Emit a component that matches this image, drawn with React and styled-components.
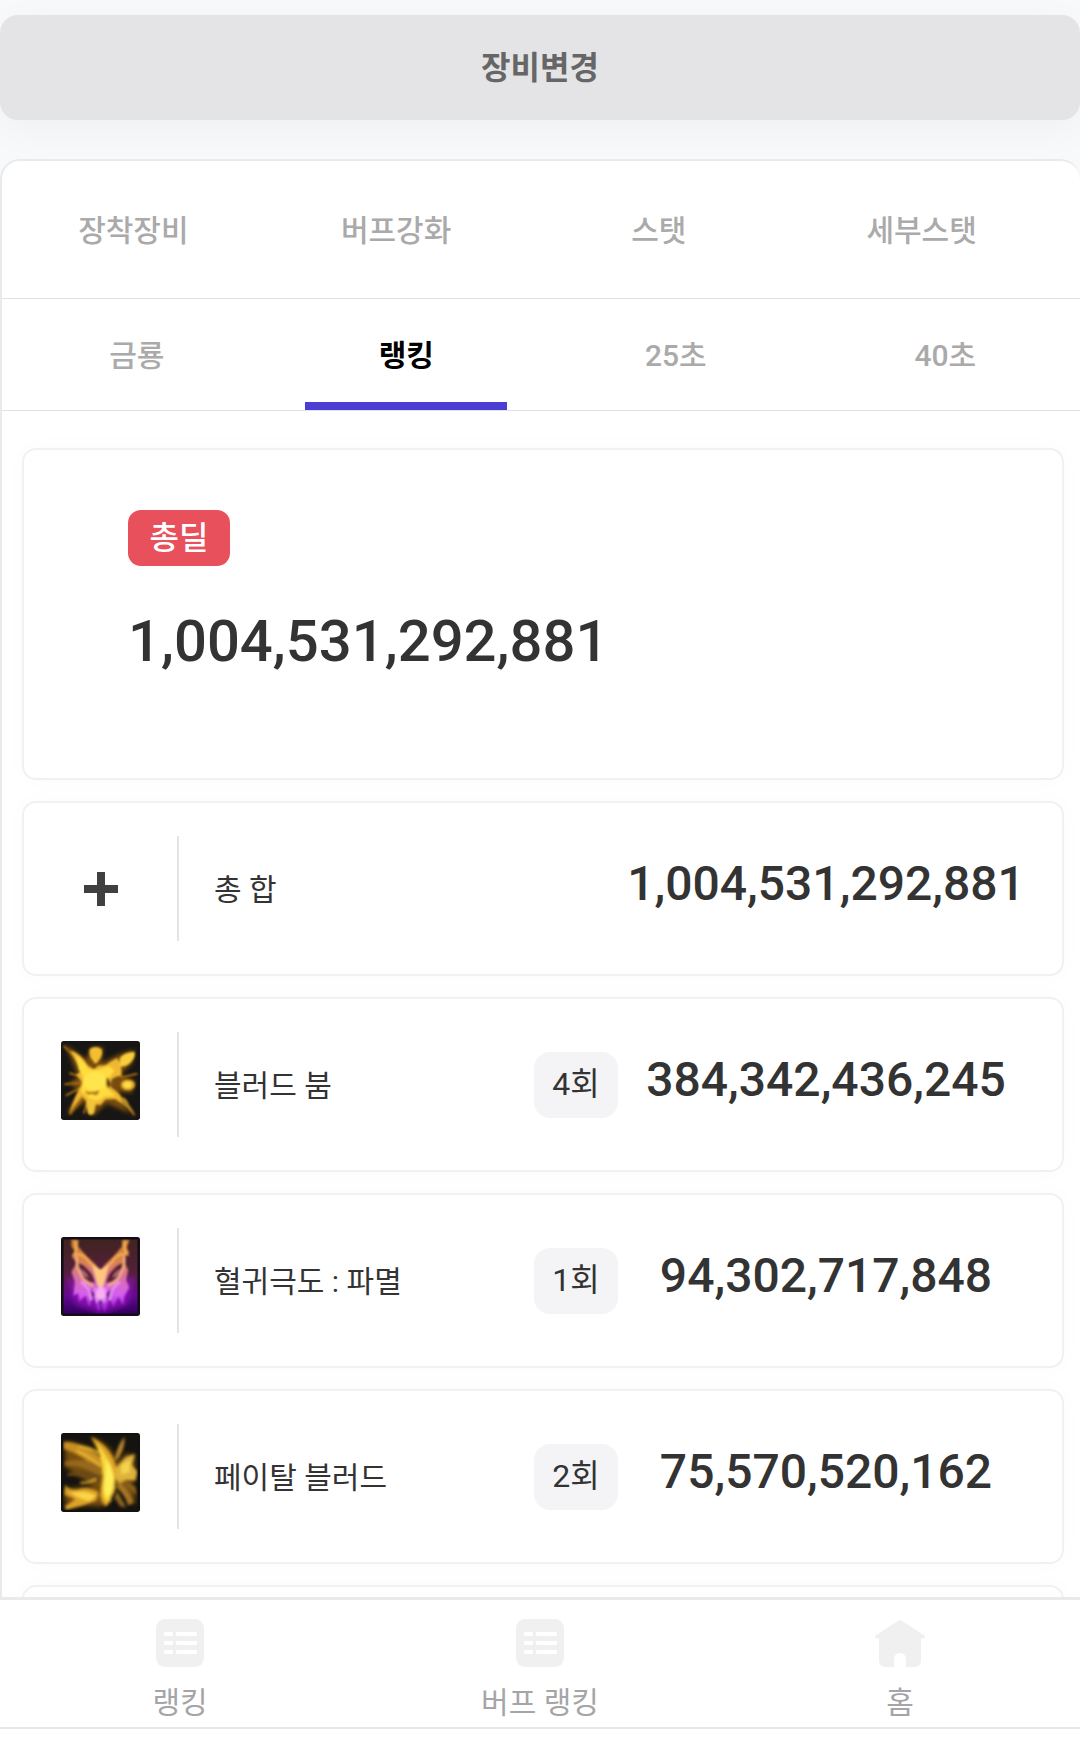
import React, { useState } from 'react'
import styled, { createGlobalStyle } from 'styled-components'

const mainTabs = ['장착장비', '버프강화', '스탯', '세부스탯']
const subTabs = ['금룡', '랭킹', '25초', '40초']
const total = 1004531292881
const skills = [
  { name: '블러드 붐', count: 4, damage: 384342436245, Icon: BloodBoomIcon },
  { name: '혈귀극도 : 파멸', count: 1, damage: 94302717848, Icon: RuinIcon },
  { name: '페이탈 블러드', count: 2, damage: 75570520162, Icon: FatalBloodIcon }
]

const format = (value) => value.toLocaleString('en-US')

export default function App () {
  const [tab, setTab] = useState('랭킹')
  return (
    <Page>
      <GlobalStyle />
      <Content>
        <ChangeButton type='button'>장비변경</ChangeButton>
        <Panel>
          <MainTabs>
            {mainTabs.map(name => <MainTab type='button' key={name}>{name}</MainTab>)}
          </MainTabs>
          <SubTabs>
            {subTabs.map(name =>
              <SubTab type='button' key={name} $active={name === tab} onClick={() => setTab(name)}>
                {name}
              </SubTab>
            )}
          </SubTabs>
          <List>
            <Summary>
              <Label>총딜</Label>
              <Total>{format(total)}</Total>
            </Summary>
            <Row>
              <IconCell><PlusIcon /></IconCell>
              <Name>총 합</Name>
              <Damage>{format(total)}</Damage>
            </Row>
            {skills.map(({ name, count, damage, Icon }) =>
              <Row key={name}>
                <IconCell><Icon /></IconCell>
                <Name>{name}</Name>
                <Count>{count}회</Count>
                <Damage>{format(damage)}</Damage>
              </Row>
            )}
            <Row />
          </List>
        </Panel>
      </Content>
      <BottomNav>
        <NavLink href='#ranking'><ListIcon />랭킹</NavLink>
        <NavLink href='#buff'><ListIcon />버프 랭킹</NavLink>
        <NavLink href='#home'><HomeIcon />홈</NavLink>
      </BottomNav>
    </Page>
  )
}

function PlusIcon () {
  return (
    <svg width='36' height='36' viewBox='0 0 36 36' aria-hidden='true'>
      <path d='M14 1h8v13h13v8H22v13h-8V22H1v-8h13z' fill='#404040' />
    </svg>
  )
}

function ListIcon () {
  return (
    <svg width='48' height='48' viewBox='0 0 48 48' aria-hidden='true'>
      <rect width='48' height='48' rx='9' fill='#f0f0f0' />
      <g fill='#fff'>
        <rect x='8' y='13' width='9' height='4' rx='1' />
        <rect x='20' y='13' width='21' height='4' rx='1' />
        <rect x='8' y='22' width='9' height='4' rx='1' />
        <rect x='20' y='22' width='21' height='4' rx='1' />
        <rect x='8' y='31' width='9' height='4' rx='1' />
        <rect x='20' y='31' width='21' height='4' rx='1' />
      </g>
    </svg>
  )
}

function HomeIcon () {
  return (
    <svg width='50' height='48' viewBox='0 0 50 48' aria-hidden='true'>
      <path
        d='M23 2q2-2 4 0l22 14q2 2 0 3-1 1-3 0v22q0 7-6 7h-9v-7q0-7-6-7t-6 7v7h-9q-6 0-6-7V19q-2 1-3 0-2-1 0-3z'
        fill='#f0f0f0'
      />
    </svg>
  )
}

function BloodBoomIcon () {
  return (
    <SkillIcon viewBox='0 0 234 234' aria-hidden='true'>
      <defs>
        <filter id='boomSoft'><feGaussianBlur stdDeviation='3' /></filter>
        <filter id='boomGlow'><feGaussianBlur stdDeviation='7' /></filter>
      </defs>
      <rect width='234' height='234' rx='8' fill='#171615' />
      <g filter='url(#boomGlow)' fill='#8f5a08' opacity='.8'>
        <path d='M15 12L75 55 88 20 125 18 120 65 170 40 215 25 212 65 175 100 220 120 210 155 165 150 205 215 135 185 95 222 75 180 18 215 55 150 25 125 50 105z' />
      </g>
      <g filter='url(#boomSoft)'>
        <g stroke='#a66b12' strokeWidth='6' fill='none'>
          <path d='M8 14L75 82M10 128l65-6M14 162l60-32M26 218l45-60M218 220l-60-70M226 97l-50 12M68 215l8-30M25 95l45 15' />
        </g>
        <path d='M28 28Q60 38 79 72L97 84 112 72Q132 75 145 62L166 50Q182 74 179 103L163 106 150 113 148 137 164 149Q182 163 190 192L160 172 132 173 116 190 78 182 62 164 40 192 22 216 44 162 63 123 45 99 59 91Z' fill='#f0b831' />
        <path d='M45 43Q70 58 81 83L111 85 142 74 158 86 142 112 140 143 162 163 132 163 110 177 84 171 59 149 67 109 52 84Z' fill='#ffdc3f' />
        <path d='M85 24Q103 11 121 25 125 42 112 57 103 76 93 56 81 45 85 24Z' fill='#f4be31' />
        <path d='M174 52Q182 35 218 32 222 50 204 66 185 81 173 73Z' fill='#f8cf3a' />
        <ellipse cx='198' cy='130' rx='21' ry='16' fill='#e0a82a' />
        <ellipse cx='197' cy='130' rx='12' ry='9' fill='#ffdf49' />
        <path d='M74 179q14-13 31 0l-7 35q-14 12-19-2z' fill='#f2c439' />
        <path d='M176 166q18-1 25 22l17 25-35-25z' fill='#b68c28' />
        <path d='M70 147q23 8 43-2-2 24-22 11-13 9-21-9z' fill='#b6781c' />
        <path d='M138 107l12 21-9 13q-16-16-3-34z' fill='#6d490f' />
        <ellipse cx='100' cy='119' rx='34' ry='27' fill='#ffe54d' />
      </g>
    </SkillIcon>
  )
}

function RuinIcon () {
  return (
    <SkillIcon viewBox='0 0 234 234' aria-hidden='true'>
      <defs>
        <linearGradient id='ruinBack' x2='0' y2='1'>
          <stop offset='0' stopColor='#402320' />
          <stop offset='.45' stopColor='#54203b' />
          <stop offset='.75' stopColor='#650991' />
          <stop offset='1' stopColor='#31005d' />
        </linearGradient>
        <linearGradient id='ruinFace' x2='0' y2='1'>
          <stop offset='0' stopColor='#c9802f' />
          <stop offset='.3' stopColor='#d9834f' />
          <stop offset='.5' stopColor='#d8739b' />
          <stop offset='.75' stopColor='#d55ff0' />
          <stop offset='1' stopColor='#8f14cb' />
        </linearGradient>
        <filter id='ruinSoft'><feGaussianBlur stdDeviation='3' /></filter>
        <filter id='ruinGlow'><feGaussianBlur stdDeviation='9' /></filter>
      </defs>
      <rect width='234' height='234' rx='8' fill='#15101a' />
      <rect x='7' y='7' width='220' height='220' fill='url(#ruinBack)' />
      <path d='M17 115q100 60 200 0l-20 85-75 27-78-27z' fill='#a719cf' opacity='.6' filter='url(#ruinGlow)' />
      <g filter='url(#ruinSoft)'>
        <path d='M31 7L52 8 51 29 77 58 101 80 117 98 132 80 158 55 180 29 181 8 203 8 195 31 202 47 187 57 189 77 199 98 193 127 202 150 188 174 184 202 170 177 155 206 144 182 129 224 120 199 111 224 98 180 83 206 73 173 54 191 51 166 37 174 41 133 31 104 46 76 32 58 45 48 31 28Z' fill='url(#ruinFace)' />
        <path d='M46 79q18-4 33 16 18 15 22 42l-17-4q-34-17-38-54z' fill='#5c2136' />
        <path d='M188 79q-18-4-33 16-18 15-22 42l17-4q34-17 38-54z' fill='#5c2136' />
        <path d='M53 94q20 4 29 27l-13-4q-14-8-16-23zM181 94q-20 4-29 27l13-4q14-8 16-23z' fill='#b0647a' />
        <path d='M42 12q8 23-3 39 31-3 45 24 23 19 33 37 11-18 33-36 13-28 45-25-12-17-3-39' fill='none' stroke='#f5ac51' strokeWidth='7' />
        <path d='M47 56q-4 27 10 52 10 27 38 36M187 56q4 27-10 52-10 27-38 36' fill='none' stroke='#f8ae82' strokeWidth='7' />
        <path d='M92 82l25 14 25-14-12 43-5 20h-16l-5-20z' fill='#ffc87e' />
        <path d='M77 145l23 24-11 29zM157 145l-23 24 11 29zM110 178h14l-7 36z' fill='#5b147c' />
        <path d='M60 132l22 22 8 33M174 132l-22 22-8 33M103 151l4 42M131 151l-4 42' fill='none' stroke='#f193fb' strokeWidth='7' />
        <path d='M112 145l12 1 8 30-15 13-14-13z' fill='#f8b0f1' />
      </g>
      <path d='M7 0h220v7H7zM0 9h7v216H0zM227 9h7v216h-7zM7 227h220v7H7z' fill='#130e16' />
    </SkillIcon>
  )
}

function FatalBloodIcon () {
  return (
    <SkillIcon viewBox='0 0 234 234' aria-hidden='true'>
      <defs>
        <filter id='fatalSoft'><feGaussianBlur stdDeviation='4' /></filter>
        <filter id='fatalGlow'><feGaussianBlur stdDeviation='8' /></filter>
      </defs>
      <rect width='234' height='234' rx='8' fill='#151310' />
      <path d='M12 28Q83 29 132 80L92 13Q157 38 164 87L195 60 220 69 213 155 223 214 162 145 126 218 13 211 8 166 98 157 12 101Z' fill='#8a590c' opacity='.85' filter='url(#fatalGlow)' />
      <g filter='url(#fatalSoft)'>
        <path d='M8 26Q78 29 132 88L126 125Q71 67 8 47Z' fill='#c98f22' />
        <path d='M88 10Q156 45 166 113 171 175 134 217 111 205 119 153 137 87 88 10Z' fill='#e0a628' />
        <path d='M104 28Q152 84 158 136 156 181 139 204 121 194 124 154 132 100 104 28Z' fill='#fbd83e' />
        <path d='M136 78Q160 118 154 156 149 180 138 190 127 183 130 152Z' fill='#fff05a' />
        <path d='M12 85Q78 69 122 103L116 130Q61 92 12 97Z' fill='#96691b' />
        <path d='M19 121q49-27 99 8l-7 19q-42-28-92-21z' fill='#6a4812' />
        <path d='M13 152q10 25 52 12 35 0 54 17l-16 20-37 13-51 14-4-12 31-20-31-13z' fill='#dda327' />
        <path d='M27 176q47-7 78 10l-22 16-30-10z' fill='#fad447' />
        <path d='M158 81q10-48 30-69 3 31-19 66z' fill='#b8842a' />
        <path d='M162 104l30-32 27-10-9 32 16 20-5 27-29-2-30 21z' fill='#ddb33a' />
        <path d='M178 94l27-13-2 35-25 7z' fill='#f5d34c' />
        <path d='M160 135q39 23 56 71l-17 9q-12-43-43-59z' fill='#a57620' />
        <path d='M168 174l25 47-18-4-23-37zM177 139l43 21 4 26z' fill='#8d641c' />
        <path d='M112 60q-22-17-61-21m67 60q-37-32-72-46m57 83q-12 12-46 12' fill='none' stroke='#f1bf39' strokeWidth='5' />
        <path d='M166 152q6 29-18 60l-2-22q20-23 16-58z' fill='#30220b' />
        <path d='M105 159q11 18-2 38 11-9 14-25z' fill='#3a280a' />
      </g>
      <path d='M7 0h220v6H7zM0 9h6v216H0zM228 9h6v216h-6zM7 228h220v6H7z' fill='#12110f' />
    </SkillIcon>
  )
}

const GlobalStyle = createGlobalStyle`
  * {
    box-sizing: border-box;
  }
  body {
    margin: 0;
    background: #f7f9fb;
    color: #333;
    font-family: Roboto, "Noto Sans CJK KR", sans-serif;
  }
  button {
    border: 0;
    background: none;
    font-family: inherit;
    cursor: pointer;
  }
`
const Page = styled.div`
  height: 100vh;
  display: flex;
  flex-direction: column;
`
const Content = styled.main`
  flex: 1;
  min-height: 0;
  padding-top: 15px;
  overflow-y: auto;
  scrollbar-width: none;
`
const ChangeButton = styled.button`
  display: block;
  width: 100%;
  height: 105px;
  margin-bottom: 39px;
  padding: 0 0 6px;
  border-radius: 18px;
  background: #e4e4e6;
  box-shadow: 0 10px 40px rgba(0, 0, 0, 0.04);
  color: #666;
  font-size: 32px;
  font-weight: 700;
`
const Panel = styled.section`
  position: relative;
  border: 2px solid #e8eaec;
  border-right: 0;
  border-radius: 20px 20px 0 0;
  background: #fff;
`
const Tabs = styled.nav`
  display: grid;
  grid-template-columns: repeat(4, 1fr);
  border-bottom: 1px solid #e2e2e4;
`
const MainTabs = styled(Tabs)`
  height: 138px;
  padding-right: 27px;
`
const SubTabs = styled(Tabs)`
  height: 112px;
`
const MainTab = styled.button`
  padding: 0 0 4px;
  color: #aaa;
  font-size: 30px;
  font-weight: 500;
`
const SubTab = styled.button`
  padding: 10px 0 0;
  display: flex;
  flex-direction: column;
  justify-content: space-between;
  align-items: center;
  color: ${props => props.$active ? '#000' : '#aaa'};
  font-size: 30px;
  line-height: 93px;
  font-weight: ${props => props.$active ? 700 : 500};
  &::after {
    content: '';
    width: 75%;
    height: 8px;
    background: ${props => props.$active ? '#4b3fd3' : 'transparent'};
  }
`
const List = styled.div`
  display: flex;
  flex-direction: column;
  gap: 21px;
  padding: 37px 16px 21px 20px;
`
const Card = styled.div`
  border: 2px solid #f0f1f2;
  border-radius: 14px;
  background: #fff;
  box-shadow: 0 0 24px rgba(0, 0, 0, 0.02);
`
const Summary = styled(Card)`
  height: 332px;
  padding: 60px 104px;
`
const Label = styled.div`
  width: 102px;
  height: 56px;
  border-radius: 13px;
  background: #e8505b;
  color: #fff;
  font-size: 32px;
  font-weight: 500;
  line-height: 56px;
  text-align: center;
`
const Total = styled.div`
  margin-top: 40px;
  font-size: 58px;
  font-weight: 500;
  line-height: 70px;
`
const Row = styled(Card)`
  flex-shrink: 0;
  height: 175px;
  display: flex;
  align-items: center;
  padding-right: 28px;
`
const IconCell = styled.div`
  width: 155px;
  height: 105px;
  display: flex;
  align-items: center;
  justify-content: center;
  border-right: 2px solid #e2e4e6;
`
const SkillIcon = styled.svg`
  width: 79px;
  height: 79px;
  margin-bottom: 8px;
`
const Name = styled.div`
  flex: 1;
  padding: 0 0 4px 35px;
  font-size: 30px;
  font-weight: 400;
  white-space: nowrap;
`
const Count = styled.div`
  width: 84px;
  height: 66px;
  border-radius: 16px;
  background: #f4f4f6;
  font-size: 32px;
  line-height: 64px;
  text-align: center;
`
const Damage = styled.div`
  width: 416px;
  padding-bottom: 10px;
  font-size: 48px;
  font-weight: 500;
  text-align: center;
`
const BottomNav = styled.nav`
  position: relative;
  height: 146px;
  display: grid;
  grid-template-columns: repeat(3, 1fr);
  padding-bottom: 14px;
  border-top: 3px solid #eaeaea;
  background: #fff;
`
const NavLink = styled.a`
  display: flex;
  flex-direction: column;
  align-items: center;
  gap: 14px;
  padding-top: 19px;
  border-bottom: 2px solid #e8e8e8;
  color: #a5a5a7;
  font-size: 30px;
  line-height: 44px;
  text-decoration: none;
`
